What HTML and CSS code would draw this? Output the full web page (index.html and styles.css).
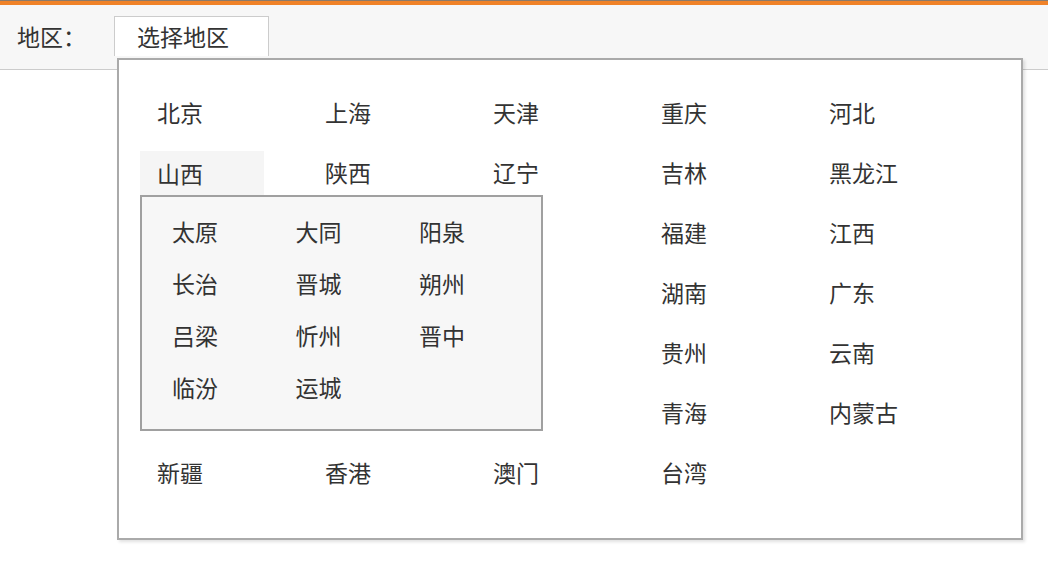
FILE: index.html
```html
<!DOCTYPE html>
<html lang="zh-CN">
<head>
    <meta charset="UTF-8">
    <title>地区选择</title>
    <link rel="stylesheet" href="styles.css">
</head>
<body>
    <div class="topbar"></div>
    <div class="header">
        <span class="label">地区：</span>
        <div class="select-wrap">
            <div class="select-box">选择地区</div>

            <div class="dropdown">
                <ul class="province-list">
                    <li>北京</li>
                    <li>上海</li>
                    <li>天津</li>
                    <li>重庆</li>
                    <li>河北</li>
                    <li class="active">山西
                        <ul class="city-list">
                            <li>太原</li>
                            <li>大同</li>
                            <li>阳泉</li>
                            <li>长治</li>
                            <li>晋城</li>
                            <li>朔州</li>
                            <li>吕梁</li>
                            <li>忻州</li>
                            <li>晋中</li>
                            <li>临汾</li>
                            <li>运城</li>
                        </ul>
                    </li>
                    <li>陕西</li>
                    <li>辽宁</li>
                    <li>吉林</li>
                    <li>黑龙江</li>
                    <!-- covered by the city list -->
                    <li class="covered">江苏</li>
                    <li class="covered">浙江</li>
                    <li class="covered">安徽</li>
                    <li>福建</li>
                    <li>江西</li>
                    <li class="covered">山东</li>
                    <li class="covered">河南</li>
                    <li class="covered">湖北</li>
                    <li>湖南</li>
                    <li>广东</li>
                    <li class="covered">广西</li>
                    <li class="covered">海南</li>
                    <li class="covered">四川</li>
                    <li>贵州</li>
                    <li>云南</li>
                    <li class="covered">西藏</li>
                    <li class="covered">甘肃</li>
                    <li class="covered">宁夏</li>
                    <li>青海</li>
                    <li>内蒙古</li>
                    <li>新疆</li>
                    <li>香港</li>
                    <li>澳门</li>
                    <li>台湾</li>
                </ul>
            </div>
        </div>
    </div>
    <div class="content"></div>
</body>
</html>
```

FILE: styles.css
```css
html, body {
    height: 100%;
}

body {
    margin: 0;
    background-color: #fff;
    color: #333;
    font-family: "Noto Sans CJK SC", "Liberation Sans", sans-serif;
    font-size: 23px;
}

ul {
    list-style: none;
    margin: 0;
    padding: 0;
}

.topbar {
    height: 4px;
    background-color: #f08228;
    border-top: 1px solid #8c7a6a;
}

.header {
    position: relative;
    z-index: 1;
    display: flex;
    align-items: flex-start;
    height: 64px;
    padding-left: 17px;
    background-color: #f7f7f7;
    border-bottom: 1px solid #ccc;
}

.content {
    height: 492px;
}

.label {
    margin-top: 16px;
    width: 97px;
    line-height: 30px;
}

.select-wrap {
    position: relative;
    margin-top: 11px;
}

.select-box {
    width: 155px;
    height: 40px;
    padding-left: 22px;
    box-sizing: border-box;
    line-height: 38px;
    background-color: #fff;
    border: 1px solid #ccc;
    border-bottom: none;
}

.dropdown {
    position: absolute;
    left: 3px;
    top: 42px;
    width: 906px;
    height: 482px;
    box-sizing: border-box;
    padding: 30px 0 0 21px;
    background-color: #fff;
    border: 2px solid #aaa;
    box-shadow: 2px 2px 3px rgba(0, 0, 0, 0.12);
}

.province-list {
    display: grid;
    grid-template-columns: repeat(5, 124px);
    grid-auto-rows: 44px;
    column-gap: 44px;
    row-gap: 16px;
}

.province-list > li {
    padding-left: 17px;
    line-height: 44px;
    white-space: nowrap;
}

.province-list > li.active {
    position: relative;
    top: 1px;
    background-color: #f5f5f5;
}

.province-list > li.covered {
    visibility: hidden;
}

.city-list {
    position: absolute;
    left: 0;
    top: 44px;
    width: 403px;
    height: 236px;
    box-sizing: border-box;
    padding: 19px 0 0 30px;
    display: grid;
    grid-template-columns: repeat(3, 123.5px);
    grid-auto-rows: 30px;
    row-gap: 22px;
    background-color: #f7f7f7;
    border: 2px solid #a0a0a0;
    line-height: 30px;
}
```
